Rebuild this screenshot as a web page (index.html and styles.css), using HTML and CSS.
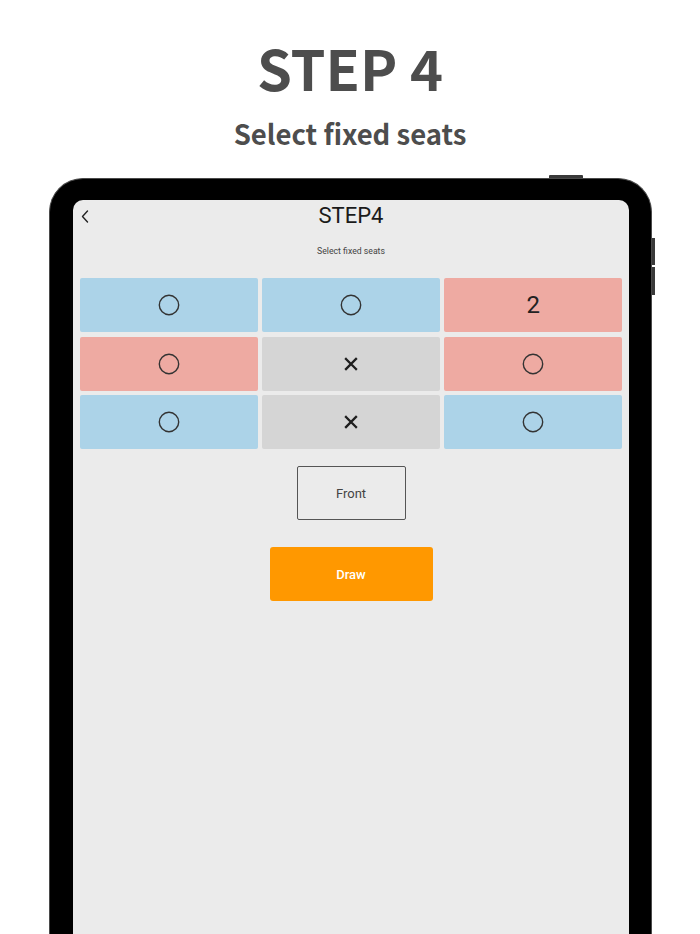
FILE: index.html
```html
<!DOCTYPE html>
<html lang="en">
<head>
<meta charset="utf-8">
<title>STEP 4</title>
<link rel="stylesheet" href="styles.css">
</head>
<body>
<div class="page">
  <header class="hero">
    <h1 class="hero-title">STEP 4</h1>
    <h2 class="hero-sub">Select fixed seats</h2>
  </header>
  <div class="device">
    <span class="btn-top"></span>
    <span class="btn-side btn-side-1"></span>
    <span class="btn-side btn-side-2"></span>
    <div class="screen">
      <div class="appbar">
        <span class="back">
          <svg width="8" height="13" viewBox="0 0 8 13"><polyline points="6.5,1 1.5,6.5 6.5,12" fill="none" stroke="#222" stroke-width="1.4" stroke-linecap="round" stroke-linejoin="round"/></svg>
        </span>
        <span class="app-title">STEP4</span>
        <span></span>
      </div>
      <p class="app-sub">Select fixed seats</p>
      <div class="seats">
        <div class="seat blue"><svg class="ring" width="22" height="22" viewBox="0 0 22 22"><circle cx="11" cy="11" r="9.7" fill="none" stroke="#333" stroke-width="1.4"/></svg></div>
        <div class="seat blue"><svg class="ring" width="22" height="22" viewBox="0 0 22 22"><circle cx="11" cy="11" r="9.7" fill="none" stroke="#333" stroke-width="1.4"/></svg></div>
        <div class="seat red"><span class="num">2</span></div>
        <div class="seat red"><svg class="ring" width="22" height="22" viewBox="0 0 22 22"><circle cx="11" cy="11" r="9.7" fill="none" stroke="#333" stroke-width="1.4"/></svg></div>
        <div class="seat gray"><svg class="cross" width="14" height="14" viewBox="0 0 14 14"><path d="M2 2 L12 12 M12 2 L2 12" stroke="#1e1e1e" stroke-width="2.3" stroke-linecap="square"/></svg></div>
        <div class="seat red"><svg class="ring" width="22" height="22" viewBox="0 0 22 22"><circle cx="11" cy="11" r="9.7" fill="none" stroke="#333" stroke-width="1.4"/></svg></div>
        <div class="seat blue"><svg class="ring" width="22" height="22" viewBox="0 0 22 22"><circle cx="11" cy="11" r="9.7" fill="none" stroke="#333" stroke-width="1.4"/></svg></div>
        <div class="seat gray"><svg class="cross" width="14" height="14" viewBox="0 0 14 14"><path d="M2 2 L12 12 M12 2 L2 12" stroke="#1e1e1e" stroke-width="2.3" stroke-linecap="square"/></svg></div>
        <div class="seat blue"><svg class="ring" width="22" height="22" viewBox="0 0 22 22"><circle cx="11" cy="11" r="9.7" fill="none" stroke="#333" stroke-width="1.4"/></svg></div>
      </div>
      <div class="front">Front</div>
      <div class="draw">Draw</div>
    </div>
  </div>
</div>
</body>
</html>
```

FILE: styles.css
```css
* { box-sizing: border-box; }
html, body {
  margin: 0;
  padding: 0;
  background: #ffffff;
}
.page {
  width: 700px;
  height: 934px;
  overflow: hidden;
  display: flex;
  flex-direction: column;
}
.hero {
  padding-top: 39px;
  text-align: center;
  font-family: "Noto Sans CJK JP", "Noto Sans", sans-serif;
  color: #4d4d4d;
}
.hero-title {
  margin: 0;
  font-size: 56px;
  line-height: 56px;
  font-weight: 700;
}
.hero-sub {
  margin: 25px 0 0;
  font-size: 27.5px;
  line-height: 27px;
  font-weight: 700;
}
.device {
  position: relative;
  margin: 31px 0 0 49px;
  width: 603px;
  flex: 1;
  background: #000;
  border: 1px solid #4a4a4a;
  border-bottom: none;
  border-radius: 34px 34px 0 0;
  padding: 21px 22px 0 23px;
  display: flex;
}
.btn-top {
  position: absolute;
  left: 499px;
  top: -4px;
  width: 34px;
  height: 3px;
  background: #3a3a3a;
  border-radius: 1px 1px 0 0;
}
.btn-side {
  position: absolute;
  right: -4px;
  width: 3px;
  background: #3a3a3a;
}
.btn-side-1 { top: 59px; height: 27px; }
.btn-side-2 { top: 88px; height: 28px; }
.screen {
  flex: 1;
  background: #ebebeb;
  border-radius: 10px 10px 0 0;
  font-family: Roboto, "Noto Sans", sans-serif;
  padding-top: 3px;
}
.appbar {
  display: grid;
  grid-template-columns: 1fr auto 1fr;
  align-items: center;
  height: 26px;
}
.back {
  padding-left: 8px;
  display: flex;
  align-items: center;
}
.back svg { display: block; }
.app-title {
  font-size: 22px;
  line-height: 26px;
  color: #1a1a1a;
}
.app-sub {
  margin: 16px 0 0;
  text-align: center;
  font-size: 8.7px;
  line-height: 12px;
  color: #444;
}
.seats {
  margin-top: 21px;
  padding: 0 7px;
  display: grid;
  grid-template-columns: repeat(3, 1fr);
  grid-auto-rows: 54px;
  gap: 4.7px 4.6px;
}
.seat {
  border-radius: 2px;
  display: flex;
  align-items: center;
  justify-content: center;
}
.seat svg { display: block; }
.blue { background: #acd3e8; }
.red { background: #eeaaa2; }
.gray { background: #d5d5d5; }
.num {
  font-size: 24px;
  line-height: 1;
  color: #222;
}
.front {
  margin: 17px auto 0;
  width: 109px;
  height: 54px;
  border: 1.5px solid #555;
  border-radius: 2px;
  display: flex;
  align-items: center;
  justify-content: center;
  font-size: 13px;
  color: #444;
}
.draw {
  margin: 27px auto 0;
  width: 163px;
  height: 54px;
  background: #ff9800;
  border-radius: 3px;
  display: flex;
  align-items: center;
  justify-content: center;
  font-size: 13px;
  font-weight: 500;
  color: #fff;
}
```
